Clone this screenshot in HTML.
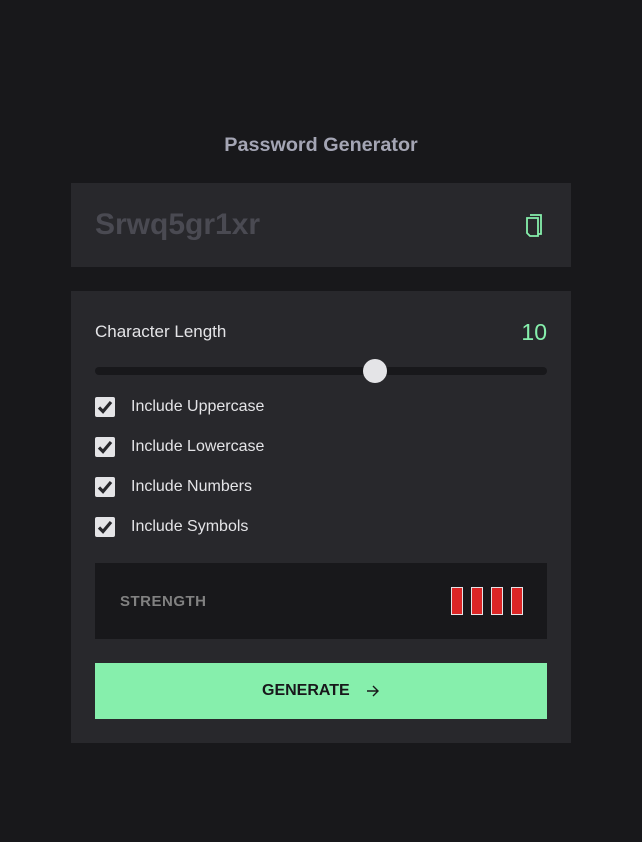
<!DOCTYPE html>
<html><head><meta charset="utf-8"><style>
*{margin:0;padding:0;box-sizing:border-box}
body{width:642px;height:842px;background:#18181b;font-family:"Liberation Sans",Arial,sans-serif;position:relative;overflow:hidden}
.a{position:absolute}
.title{left:0;width:642px;top:134px;text-align:center;font-weight:bold;font-size:19.8px;color:#a4a5b4}
.box{background:#28282c;left:71px;width:500px}
.pw{left:95px;top:208px;font-size:30px;font-weight:bold;color:#4a4a52}
.lbl{color:#e4e4e7;font-size:16px}
.cb{left:95px;width:20px;height:20px;background:#e4e4e7;border-radius:2px}
.cb svg{position:absolute;left:2px;top:2px}
.bar{width:12px;height:28px;background:#dc2626;border:1px solid #e4e4e7;top:587px}
</style></head><body>
<div class="a title">Password Generator</div>
<div class="a box" style="top:183px;height:84px"></div>
<div class="a pw">Srwq5gr1xr</div>
<svg class="a" style="left:524px;top:212px" width="20" height="26" viewBox="0 0 20 26" fill="none" stroke="#86efac" stroke-width="1.8">
<path d="M6 3 H17 V22 H14"/><path d="M3 6 H14 V24 H6 L3 21 Z"/>
</svg>
<div class="a box" style="top:291px;height:452px"></div>
<div class="a lbl" style="left:95px;top:322px;font-size:17px">Character Length</div>
<div class="a" style="right:95px;top:319px;font-size:23px;color:#86efac">10</div>
<div class="a" style="left:95px;top:367px;width:452px;height:8px;background:#18181b;border-radius:4px"></div>
<div class="a" style="left:363px;top:359px;width:24px;height:24px;background:#e4e4e7;border-radius:50%"></div>

<div class="a cb" style="top:397px"><svg width="16" height="16" viewBox="0 0 16 16"><path d="M2 8.5 L6 12.5 L14 3" fill="none" stroke="#28282c" stroke-width="3.2"/></svg></div>
<div class="a lbl" style="left:131px;top:398px">Include Uppercase</div>
<div class="a cb" style="top:437px"><svg width="16" height="16" viewBox="0 0 16 16"><path d="M2 8.5 L6 12.5 L14 3" fill="none" stroke="#28282c" stroke-width="3.2"/></svg></div>
<div class="a lbl" style="left:131px;top:438px">Include Lowercase</div>
<div class="a cb" style="top:477px"><svg width="16" height="16" viewBox="0 0 16 16"><path d="M2 8.5 L6 12.5 L14 3" fill="none" stroke="#28282c" stroke-width="3.2"/></svg></div>
<div class="a lbl" style="left:131px;top:478px">Include Numbers</div>
<div class="a cb" style="top:517px"><svg width="16" height="16" viewBox="0 0 16 16"><path d="M2 8.5 L6 12.5 L14 3" fill="none" stroke="#28282c" stroke-width="3.2"/></svg></div>
<div class="a lbl" style="left:131px;top:518px">Include Symbols</div>

<div class="a" style="left:95px;top:563px;width:452px;height:76px;background:#18181b"></div>
<div class="a" style="left:120px;top:593px;font-size:15px;font-weight:bold;color:#818181;letter-spacing:0.5px">STRENGTH</div>
<div class="a bar" style="left:451px"></div>
<div class="a bar" style="left:471px"></div>
<div class="a bar" style="left:491px"></div>
<div class="a bar" style="left:511px"></div>

<div class="a" style="left:95px;top:663px;width:452px;height:56px;background:#86efac"></div>
<div class="a" style="left:262px;top:682px;font-size:16px;font-weight:bold;color:#18181b">GENERATE</div>
<svg class="a" style="left:366px;top:684px" width="14" height="14" viewBox="0 0 14 14" fill="none" stroke="#18181b" stroke-width="1.4"><path d="M1 7 H12 M7 2 L12 7 L7 12"/></svg>
</body></html>
